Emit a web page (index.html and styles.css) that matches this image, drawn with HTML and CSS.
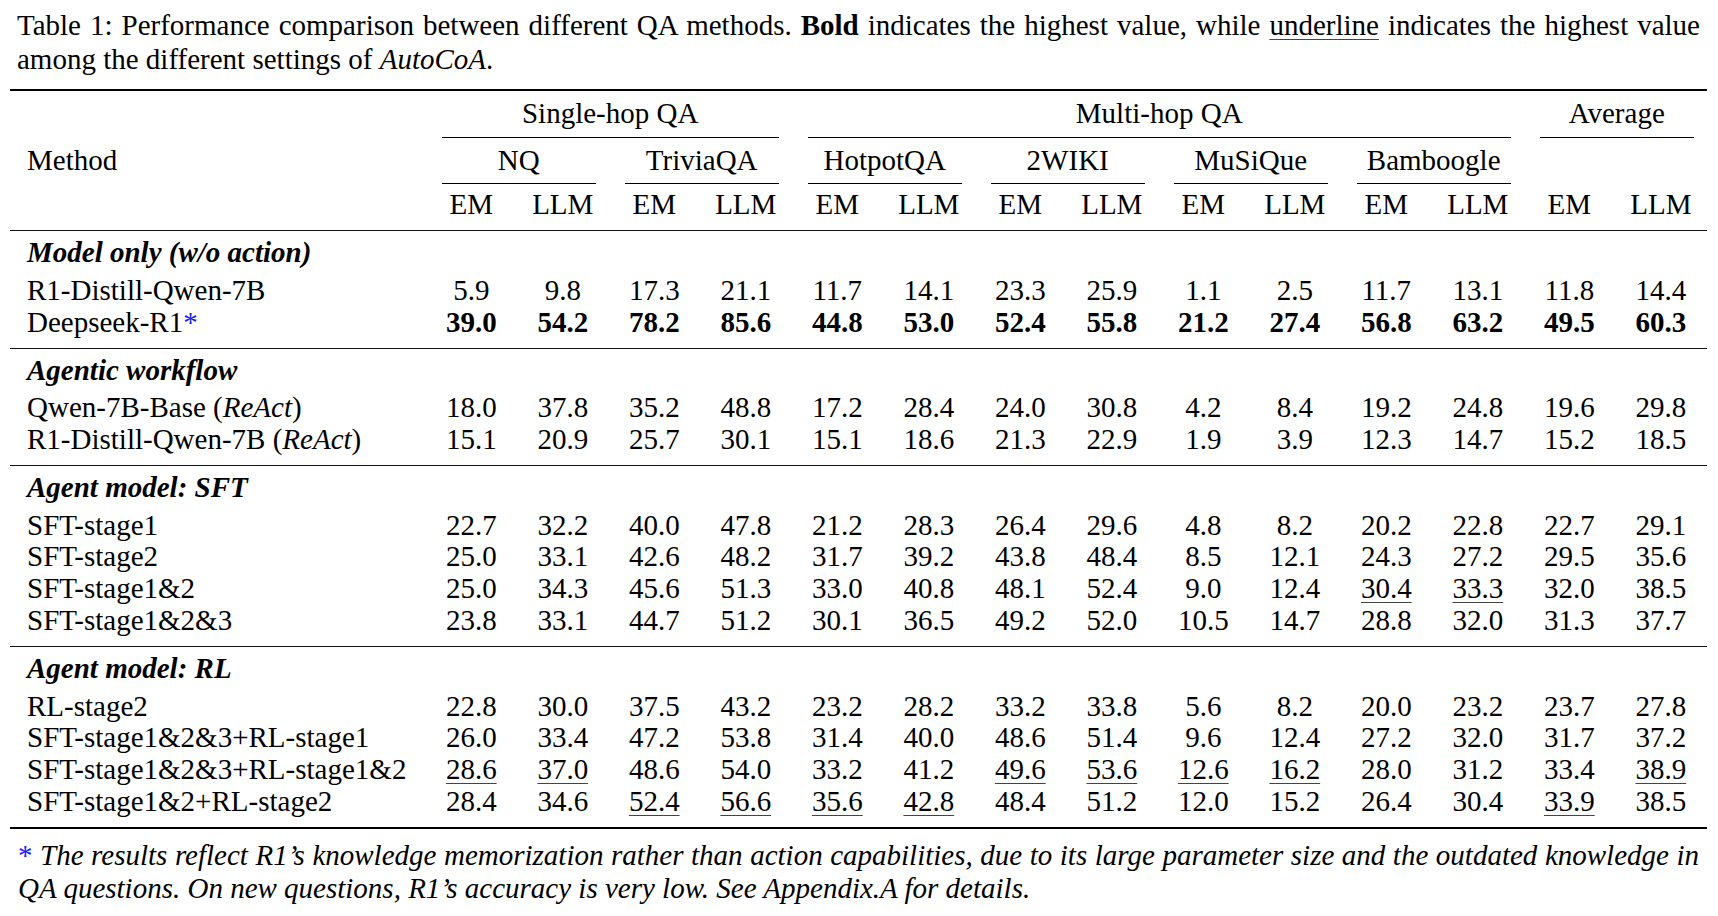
FILE: index.html
```html
<!DOCTYPE html>
<html>
<head>
<meta charset="utf-8">
<link rel="stylesheet" href="styles.css">
</head>
<body>
<div class="page">
  <p class="caption">Table 1: Performance comparison between different QA methods. <b>Bold</b> indicates the highest value, while <span class="ul">underline</span> indicates the highest value among the different settings of <i>AutoCoA</i>.</p>
  <table class="results">
    <colgroup>
      <col class="c-method">
      <col class="c-num"><col class="c-num"><col class="c-num"><col class="c-num">
      <col class="c-num"><col class="c-num"><col class="c-num"><col class="c-num">
      <col class="c-num"><col class="c-num"><col class="c-num"><col class="c-num">
      <col class="c-num"><col class="c-num">
    </colgroup>
    <thead>
      <tr class="h1">
        <th class="method" rowspan="3">Method</th>
        <th colspan="4"><div class="cm">Single-hop QA</div></th>
        <th colspan="8"><div class="cm">Multi-hop QA</div></th>
        <th colspan="2"><div class="cm">Average</div></th>
      </tr>
      <tr class="h2">
        <th colspan="2"><div class="cm">NQ</div></th>
        <th colspan="2"><div class="cm">TriviaQA</div></th>
        <th colspan="2"><div class="cm">HotpotQA</div></th>
        <th colspan="2"><div class="cm">2WIKI</div></th>
        <th colspan="2"><div class="cm">MuSiQue</div></th>
        <th colspan="2"><div class="cm">Bamboogle</div></th>
        <th colspan="2"></th>
      </tr>
      <tr class="h3">
        <th>EM</th><th>LLM</th><th>EM</th><th>LLM</th><th>EM</th><th>LLM</th><th>EM</th><th>LLM</th>
        <th>EM</th><th>LLM</th><th>EM</th><th>LLM</th><th>EM</th><th>LLM</th>
      </tr>
    </thead>
    <tbody>
      <tr class="ghead"><td colspan="15">Model only (w/o action)</td></tr>
      <tr><td class="name">R1-Distill-Qwen-7B</td><td>5.9</td><td>9.8</td><td>17.3</td><td>21.1</td><td>11.7</td><td>14.1</td><td>23.3</td><td>25.9</td><td>1.1</td><td>2.5</td><td>11.7</td><td>13.1</td><td>11.8</td><td>14.4</td></tr>
      <tr class="best"><td class="name">Deepseek-R1<span class="star">*</span></td><td>39.0</td><td>54.2</td><td>78.2</td><td>85.6</td><td>44.8</td><td>53.0</td><td>52.4</td><td>55.8</td><td>21.2</td><td>27.4</td><td>56.8</td><td>63.2</td><td>49.5</td><td>60.3</td></tr>
    </tbody>
    <tbody>
      <tr class="ghead"><td colspan="15">Agentic workflow</td></tr>
      <tr><td class="name">Qwen-7B-Base (<i>ReAct</i>)</td><td>18.0</td><td>37.8</td><td>35.2</td><td>48.8</td><td>17.2</td><td>28.4</td><td>24.0</td><td>30.8</td><td>4.2</td><td>8.4</td><td>19.2</td><td>24.8</td><td>19.6</td><td>29.8</td></tr>
      <tr><td class="name">R1-Distill-Qwen-7B (<i>ReAct</i>)</td><td>15.1</td><td>20.9</td><td>25.7</td><td>30.1</td><td>15.1</td><td>18.6</td><td>21.3</td><td>22.9</td><td>1.9</td><td>3.9</td><td>12.3</td><td>14.7</td><td>15.2</td><td>18.5</td></tr>
    </tbody>
    <tbody>
      <tr class="ghead"><td colspan="15">Agent model: SFT</td></tr>
      <tr><td class="name">SFT-stage1</td><td>22.7</td><td>32.2</td><td>40.0</td><td>47.8</td><td>21.2</td><td>28.3</td><td>26.4</td><td>29.6</td><td>4.8</td><td>8.2</td><td>20.2</td><td>22.8</td><td>22.7</td><td>29.1</td></tr>
      <tr><td class="name">SFT-stage2</td><td>25.0</td><td>33.1</td><td>42.6</td><td>48.2</td><td>31.7</td><td>39.2</td><td>43.8</td><td>48.4</td><td>8.5</td><td>12.1</td><td>24.3</td><td>27.2</td><td>29.5</td><td>35.6</td></tr>
      <tr><td class="name">SFT-stage1&amp;2</td><td>25.0</td><td>34.3</td><td>45.6</td><td>51.3</td><td>33.0</td><td>40.8</td><td>48.1</td><td>52.4</td><td>9.0</td><td>12.4</td><td><span class="ul">30.4</span></td><td><span class="ul">33.3</span></td><td>32.0</td><td>38.5</td></tr>
      <tr><td class="name">SFT-stage1&amp;2&amp;3</td><td>23.8</td><td>33.1</td><td>44.7</td><td>51.2</td><td>30.1</td><td>36.5</td><td>49.2</td><td>52.0</td><td>10.5</td><td>14.7</td><td>28.8</td><td>32.0</td><td>31.3</td><td>37.7</td></tr>
    </tbody>
    <tbody>
      <tr class="ghead"><td colspan="15">Agent model: RL</td></tr>
      <tr><td class="name">RL-stage2</td><td>22.8</td><td>30.0</td><td>37.5</td><td>43.2</td><td>23.2</td><td>28.2</td><td>33.2</td><td>33.8</td><td>5.6</td><td>8.2</td><td>20.0</td><td>23.2</td><td>23.7</td><td>27.8</td></tr>
      <tr><td class="name">SFT-stage1&amp;2&amp;3+RL-stage1</td><td>26.0</td><td>33.4</td><td>47.2</td><td>53.8</td><td>31.4</td><td>40.0</td><td>48.6</td><td>51.4</td><td>9.6</td><td>12.4</td><td>27.2</td><td>32.0</td><td>31.7</td><td>37.2</td></tr>
      <tr><td class="name">SFT-stage1&amp;2&amp;3+RL-stage1&amp;2</td><td><span class="ul">28.6</span></td><td><span class="ul">37.0</span></td><td>48.6</td><td>54.0</td><td>33.2</td><td>41.2</td><td><span class="ul">49.6</span></td><td><span class="ul">53.6</span></td><td><span class="ul">12.6</span></td><td><span class="ul">16.2</span></td><td>28.0</td><td>31.2</td><td>33.4</td><td><span class="ul">38.9</span></td></tr>
      <tr><td class="name">SFT-stage1&amp;2+RL-stage2</td><td>28.4</td><td>34.6</td><td><span class="ul">52.4</span></td><td><span class="ul">56.6</span></td><td><span class="ul">35.6</span></td><td><span class="ul">42.8</span></td><td>48.4</td><td>51.2</td><td>12.0</td><td>15.2</td><td>26.4</td><td>30.4</td><td><span class="ul">33.9</span></td><td>38.5</td></tr>
    </tbody>
  </table>
  <p class="footnote"><span class="star">*</span> The results reflect R1’s knowledge memorization rather than action capabilities, due to its large parameter size and the outdated knowledge in QA questions. On new questions, R1’s accuracy is very low. See Appendix.A for details.</p>
</div>
</body>
</html>
```

FILE: styles.css
```css
html, body {
  margin: 0;
  padding: 0;
  background: #fff;
}

body {
  font-family: "Liberation Serif", "Times New Roman", serif;
  font-size: 29px;
  color: #000;
}

.page {
  padding: 8px 0 0 10px;
  width: 1697px;
}

.caption {
  margin: 0 0 13px 7px;
  width: 1683px;
  line-height: 34px;
  text-align: justify;
}

.ul {
  text-decoration: underline;
  text-decoration-thickness: 1px;
  text-underline-offset: 4px;
  text-decoration-color: #444;
}

.results {
  border-collapse: collapse;
  table-layout: fixed;
  width: 1696.5px;
  border-top: 2px solid #000;
  border-bottom: 2px solid #000;
}

.c-method { width: 415.5px; }
.c-num { width: 91.5px; }

.results th,
.results td {
  padding: 0;
  font-weight: normal;
  line-height: 31.7px;
  text-align: center;
  white-space: nowrap;
}

.results th.method {
  text-align: left;
  vertical-align: middle;
  padding-left: 17px;
}

.cm {
  margin: 0 13px 0 16.3px;
  border-bottom: 1px solid #000;
}

.h1 .cm { padding: 6.5px 0 8px; }
.h2 .cm { padding: 6.5px 0 6.4px; }
.h3 th { padding: 5px 0 9.7px; }

.results tbody {
  border-top: 1.3px solid #111;
}

.results td.name {
  text-align: left;
  padding-left: 17px;
}

.ghead td {
  text-align: left;
  padding: 6px 0 6px 17px;
  font-weight: bold;
  font-style: italic;
}

.results tbody tr:last-child td {
  padding-bottom: 9.3px;
}

.best td:not(.name) {
  font-weight: bold;
}

.star {
  color: #1a1aff;
  font-style: normal;
}

.footnote {
  margin: 10px 0 0 8px;
  width: 1681px;
  line-height: 33px;
  font-style: italic;
  text-align: justify;
}
```
